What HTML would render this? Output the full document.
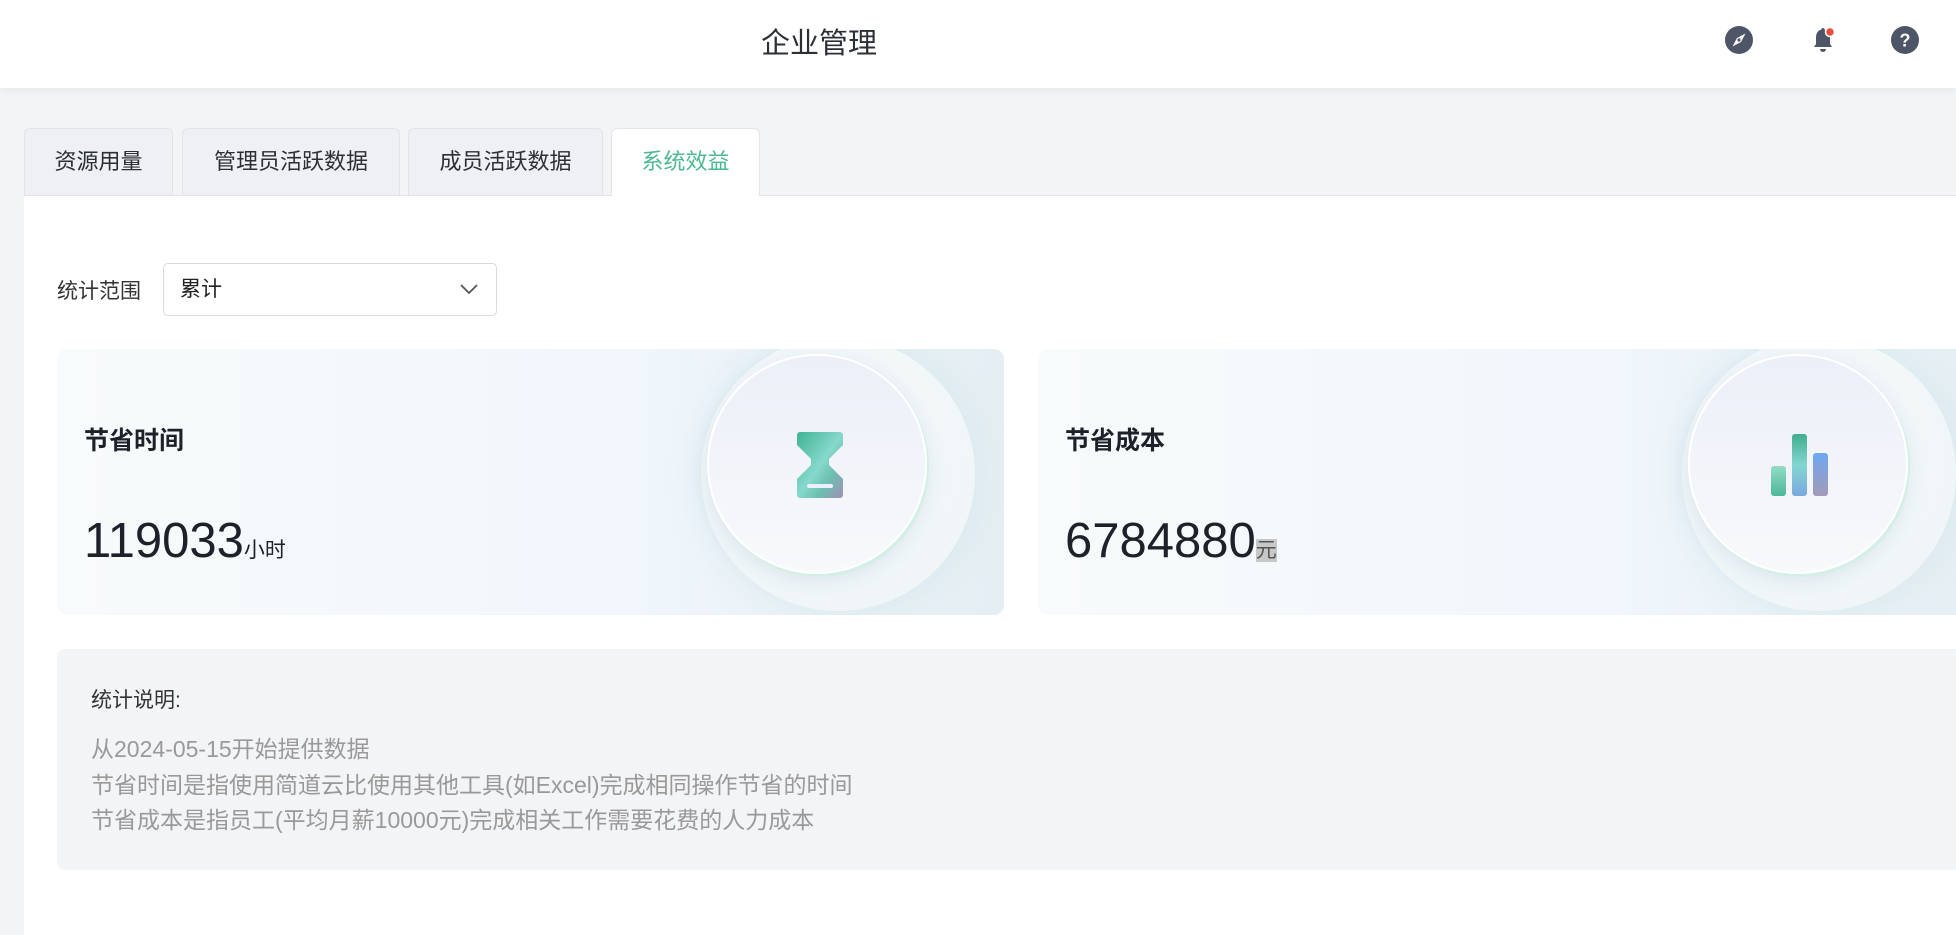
<!DOCTYPE html>
<html><head><meta charset="utf-8">
<style>
*{margin:0;padding:0;box-sizing:border-box}
body{width:1956px;height:922px;overflow:hidden;background:#f3f4f6;font-family:"Liberation Sans","Noto Sans CJK SC",sans-serif;position:relative;color:#222}
.hdr{position:absolute;left:0;top:0;width:1956px;height:88px;background:#fff;box-shadow:0 2px 8px rgba(0,0,0,.06)}
.title{position:absolute;left:761px;top:20px;font-size:29px;color:#2b2f36}
.ic{position:absolute;top:26px;width:28px;height:28px}
.tab{position:absolute;top:128px;height:67px;background:#eef0f3;border:1px solid #e2e4e8;border-bottom:none;border-radius:6px 6px 0 0;font-size:22px;line-height:66px;text-align:center;color:#2b2f36}
.tab.act{background:#fff;color:#4bb98f;height:68px;z-index:2}
.panel{position:absolute;left:24px;top:195px;width:1940px;height:740px;background:#fff;border-top:1px solid #e2e4e8}
.lbl{position:absolute;left:57px;top:275px;font-size:21px;color:#333}
.sel{position:absolute;left:163px;top:263px;width:334px;height:53px;border:1px solid #d6d9de;border-radius:5px;font-size:21px;line-height:51px;padding-left:16px;color:#222;background:#fff}
.card{position:absolute;top:349px;width:947px;height:266px;border-radius:10px;overflow:hidden;background:linear-gradient(90deg,#f8fbfb 0%,#f0f6fc 60%,#e4eef3 100%)}
.ct{position:absolute;left:27px;top:72px;font-size:25px;font-weight:bold;color:#1d2129}
.cn{position:absolute;left:27px;top:164px;font-size:49px;color:#1d2129;white-space:nowrap}
.cn span{font-size:21px}
.oc{position:absolute;border-radius:50%}
.note{position:absolute;left:57px;top:649px;width:1920px;height:221px;background:#f3f4f6;border-radius:8px}
.note .h{position:absolute;left:34px;top:35px;font-size:21px;color:#333}
.note .l{position:absolute;left:34px;top:83px;font-size:23px;line-height:35.5px;color:#999}
</style></head><body>
<div class="hdr">
<div class="title">企业管理</div>
<svg class="ic" style="left:1725px" viewBox="0 0 28 28"><circle cx="14" cy="14" r="14" fill="#4e5566"/><path d="M20.5 7.5 L16 16 L7.5 20.5 L12 12Z" fill="#fff"/><circle cx="14" cy="14" r="1.6" fill="#4e5566"/></svg>
<svg class="ic" style="left:1809px" viewBox="0 0 28 28"><path d="M14 2c-1 0-1.6.7-1.6 1.5C8.5 4.5 7 8 7 11.5V18l-2 3h18l-2-3v-6.5C21 8 19.5 4.5 15.6 3.5 15.6 2.7 15 2 14 2Z" fill="#4e5566"/><path d="M11 23a3 3 0 0 0 6 0Z" fill="#4e5566"/><circle cx="21" cy="6" r="4.5" fill="#e84c3d" stroke="#fff" stroke-width="1.5"/></svg>
<svg class="ic" style="left:1891px" viewBox="0 0 28 28"><circle cx="14" cy="14" r="14" fill="#4e5566"/><text x="14" y="20.5" text-anchor="middle" font-family="Liberation Sans" font-weight="bold" font-size="18" fill="#fff">?</text></svg>
</div>
<div class="tab" style="left:24px;width:149px">资源用量</div>
<div class="tab" style="left:182px;width:218px">管理员活跃数据</div>
<div class="tab" style="left:408px;width:195px">成员活跃数据</div>
<div class="tab act" style="left:611px;width:149px">系统效益</div>
<div class="panel"></div>
<div class="lbl">统计范围</div>
<div class="sel">累计<svg style="position:absolute;right:18px;top:20px" width="18" height="11" viewBox="0 0 18 11"><path d="M1 1l8 8 8-8" stroke="#555" stroke-width="1.8" fill="none"/></svg></div>

<div class="card" style="left:57px">
<div class="oc" style="left:644px;top:-12px;width:274px;height:274px;background:radial-gradient(circle at 40% 40%,#f6f9fb,#eef5f6);box-shadow:0 0 30px rgba(200,225,230,.5)"></div>
<div class="oc" style="left:650px;top:5px;width:220px;height:220px;background:linear-gradient(180deg,#eceff8,#f7f9fb);border:2px solid #fff;box-shadow:2px 3px 0 #d4f0e6,0 6px 20px rgba(180,200,220,.4)"></div>
<svg style="position:absolute;left:740px;top:83px" width="46" height="66" viewBox="0 0 46 66"><defs><linearGradient id="g1" x1="0" y1="0" x2="1" y2="1"><stop offset="0" stop-color="#3fb394"/><stop offset=".5" stop-color="#86d8cc"/><stop offset=".7" stop-color="#6bc1b0"/><stop offset="1" stop-color="#a08fb8"/></linearGradient></defs><path d="M3 0h40a3 3 0 0 1 3 3v10L32 27v6l14 14v16a3 3 0 0 1-3 3H3a3 3 0 0 1-3-3V47l14-14v-6L0 13V3a3 3 0 0 1 3-3Z" fill="url(#g1)"/><rect x="10" y="52" width="26" height="4" rx="2" fill="#eef"/></svg>
<div class="ct">节省时间</div>
<div class="cn">119033<span>小时</span></div>
</div>

<div class="card" style="left:1038px">
<div class="oc" style="left:644px;top:-12px;width:274px;height:274px;background:radial-gradient(circle at 40% 40%,#f6f9fb,#eef5f6);box-shadow:0 0 30px rgba(200,225,230,.5)"></div>
<div class="oc" style="left:650px;top:5px;width:220px;height:220px;background:linear-gradient(180deg,#eceff8,#f7f9fb);border:2px solid #fff;box-shadow:2px 3px 0 #d4f0e6,0 6px 20px rgba(180,200,220,.4)"></div>
<svg style="position:absolute;left:733px;top:85px" width="60" height="62" viewBox="0 0 60 62"><defs><linearGradient id="g2" x1="0" y1="0" x2="0" y2="1"><stop offset="0" stop-color="#93dcc4"/><stop offset="1" stop-color="#4bb79a"/></linearGradient><linearGradient id="g3" x1="0" y1="0" x2="0" y2="1"><stop offset="0" stop-color="#40ad8e"/><stop offset=".5" stop-color="#84d6d0"/><stop offset="1" stop-color="#7aa8e0"/></linearGradient><linearGradient id="g4" x1="0" y1="0" x2="0" y2="1"><stop offset="0" stop-color="#6ea8f0"/><stop offset="1" stop-color="#a39ab8"/></linearGradient></defs><rect x="0" y="32" width="15" height="30" rx="3" fill="url(#g2)"/><rect x="21" y="0" width="15" height="62" rx="3" fill="url(#g3)"/><rect x="42" y="19" width="15" height="43" rx="3" fill="url(#g4)"/></svg>
<div class="ct">节省成本</div>
<div class="cn">6784880<span style="background:#c8c8c8;color:#555">元</span></div>
</div>

<div class="note">
<div class="h">统计说明:</div>
<div class="l">从2024-05-15开始提供数据<br>节省时间是指使用简道云比使用其他工具(如Excel)完成相同操作节省的时间<br>节省成本是指员工(平均月薪10000元)完成相关工作需要花费的人力成本</div>
</div>
</body></html>
